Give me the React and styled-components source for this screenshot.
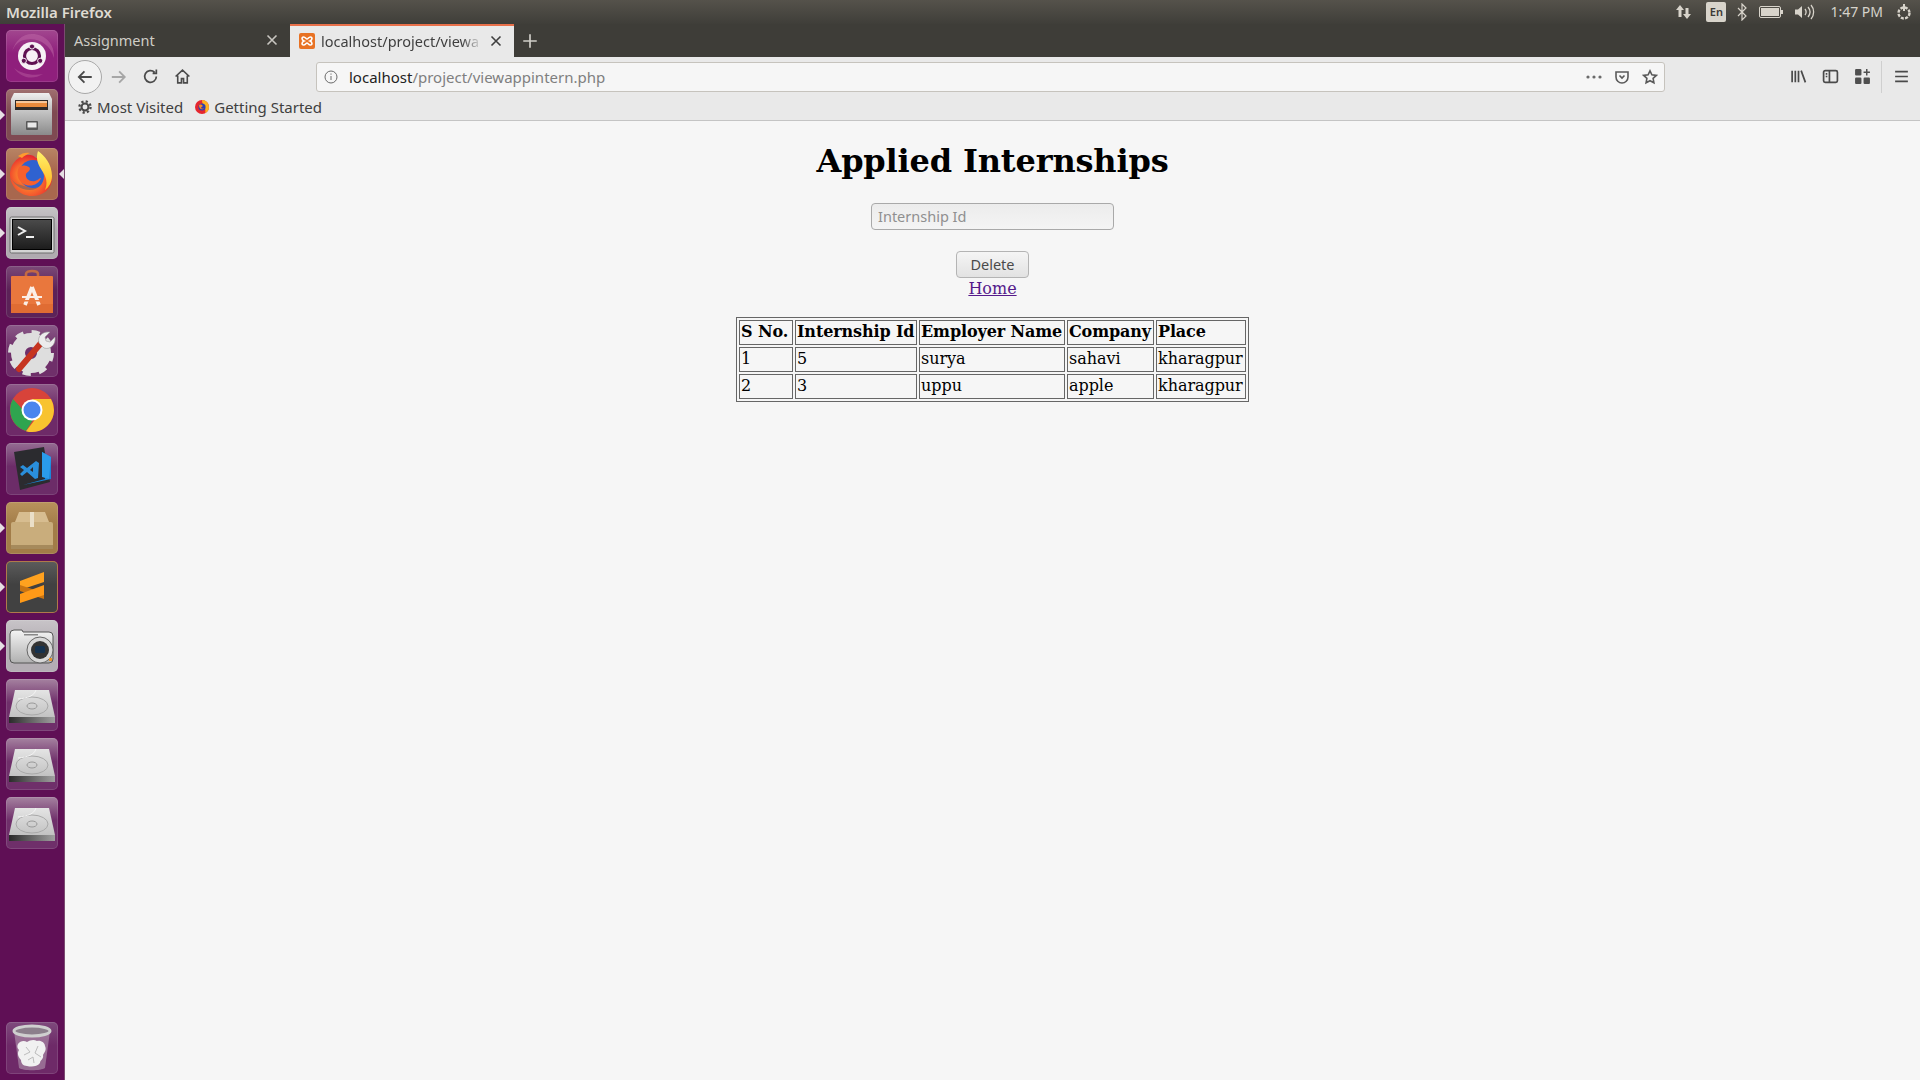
import styled, { createGlobalStyle } from 'styled-components';

const UI_FONT = '"Noto Sans", "Open Sans", sans-serif';
const PAGE_FONT = '"DejaVu Serif", serif';

const COLUMNS = [
	{ title: 'S No.', width: 54 },
	{ title: 'Internship Id', width: 122 },
	{ title: 'Employer Name', width: 146 },
	{ title: 'Company', width: 87 },
	{ title: 'Place', width: 90 },
];

const ROWS = [
	[ '1', '5', 'surya', 'sahavi', 'kharagpur' ],
	[ '2', '3', 'uppu', 'apple', 'kharagpur' ],
];

const GlobalStyle = createGlobalStyle`
	html, body {
		margin: 0;
		padding: 0;
		height: 100%;
		overflow: hidden;
		background: #f6f6f6;
	}
`;

const Screen = styled.div`
	width: 1920px;
	height: 1080px;
	display: flex;
	flex-direction: column;
	overflow: hidden;
`;

const TopBar = styled.div`
	box-sizing: border-box;
	height: 24px;
	flex: none;
	display: flex;
	align-items: center;
	justify-content: space-between;
	padding: 0 7px 1px 6px;
	background: linear-gradient(#55524b, #3f3e39);
	color: #dfdbd2;
	font: 600 15px ${ UI_FONT };
`;

const Indicators = styled.div`
	display: flex;
	align-items: center;
	height: 23px;
`;

const TimeLabel = styled.span`
	font: 400 14px ${ UI_FONT };
	color: #d6d3cb;
	margin: 0 12px 0 15px;
`;

const LangBadge = styled.span`
	width: 20px;
	height: 20px;
	border-radius: 2px;
	background: #d8d4cb;
	color: #3c3b37;
	font: 600 11px/20px ${ UI_FONT };
	text-align: center;
	margin: 0 11px 0 13px;
`;

const BatteryGlyph = styled.svg`
	margin-left: 12px;
`;

const VolumeGlyph = styled.svg`
	margin-left: 11px;
`;

const Body = styled.div`
	flex: 1;
	display: flex;
	min-height: 0;
`;

const Launcher = styled.nav`
	width: 64px;
	flex: none;
	display: flex;
	flex-direction: column;
	gap: 7px;
	padding: 6px 0;
	background: #5f0f55;
	border-right: 1px solid #7a4a70;
`;

const Tile = styled.div`
	position: relative;
	width: 52px;
	height: 52px;
	margin-left: 6px;
	margin-top: ${ ( { $bottom } ) => $bottom ? 'auto' : '0' };
	border-radius: 5px;
	background: linear-gradient(${ ( { $top } ) => $top || '#7e4a7c' }, ${ ( { $tint } ) => $tint || '#6e2a68' } 45%);
	box-shadow: inset 0 0 0 1px ${ ( { $edge } ) => $edge || 'rgba(255,255,255,.12)' };
`;

const RunPip = styled.span`
	position: absolute;
	top: 21px;
	${ ( { $right } ) => $right ? 'right: -6px;' : 'left: -6px;' }
	width: 0;
	height: 0;
	border-top: 5px solid transparent;
	border-bottom: 5px solid transparent;
	${ ( { $right } ) => $right ? 'border-right: 5px solid #e6dfe4;' : 'border-left: 5px solid #e6dfe4;' }
`;

const Glyph = styled.svg`
	display: block;
	width: 52px;
	height: 52px;
`;

const Browser = styled.div`
	flex: 1;
	min-width: 0;
	display: flex;
	flex-direction: column;
`;

const TabStrip = styled.div`
	height: 33px;
	flex: none;
	display: flex;
	align-items: stretch;
	background: #3e3d38;
`;

const Tab = styled.div`
	box-sizing: border-box;
	width: ${ ( { $active } ) => $active ? '224px' : '225px' };
	display: flex;
	align-items: center;
	gap: 6px;
	padding: 0 10px ${ ( { $active } ) => $active ? '1px' : '2px' } 9px;
	font: 400 14.5px ${ UI_FONT };
	color: ${ ( { $active } ) => $active ? '#3f3f3f' : '#cfcdc6' };
	background: ${ ( { $active } ) => $active ? '#e9e9e9' : 'transparent' };
	border-top: ${ ( { $active } ) => $active ? '2px solid #e8704a' : '0' };
`;

const TabTitle = styled.span`
	flex: 1;
	min-width: 0;
	white-space: nowrap;
`;

const FadingTabTitle = styled(TabTitle)`
	-webkit-mask-image: linear-gradient(to left, transparent, #000 20px);
	mask-image: linear-gradient(to left, transparent, #000 20px);
`;

const NewTab = styled.div`
	width: 32px;
	display: flex;
	align-items: center;
	justify-content: center;
`;

const NavBar = styled.div`
	height: 39px;
	flex: none;
	display: flex;
	align-items: center;
	background: #e9e9e9;
	padding-left: 3px;
`;

const BackButton = styled.div`
	box-sizing: border-box;
	width: 34px;
	height: 34px;
	border-radius: 50%;
	border: 1px solid #a8a8a8;
	background: #f2f2f2;
	display: flex;
	align-items: center;
	justify-content: center;
	flex: none;
`;

const NavButton = styled.div`
	width: 32px;
	height: 32px;
	display: flex;
	align-items: center;
	justify-content: center;
	flex: none;
`;

const UrlBar = styled.div`
	box-sizing: border-box;
	width: 1349px;
	height: 30px;
	margin-left: 118px;
	flex: none;
	display: flex;
	align-items: center;
	padding: 0 0 0 6px;
	background: #f6f6f6;
	border: 1px solid #c6c3bd;
	border-radius: 3px;
	font: 400 15px ${ UI_FONT };
`;

const UrlText = styled.div`
	flex: 1;
	margin-left: 10px;
	color: #7f7f7f;
	white-space: nowrap;

	b {
		font-weight: 400;
		color: #222;
	}
`;

const UrlAction = styled.span`
	width: 28px;
	height: 20px;
	display: flex;
	align-items: center;
	justify-content: center;
`;

const Tools = styled.div`
	flex: 1;
	display: flex;
	align-items: center;
	padding-left: 117px;
`;

const ToolSlot = styled.span`
	width: 32px;
	display: flex;
	align-items: center;
	justify-content: center;
	flex: none;
`;

const ToolDivider = styled.span`
	width: 1px;
	height: 32px;
	background: #cfcfcf;
	margin: 0 3px;
`;

const BookmarksBar = styled.div`
	box-sizing: border-box;
	height: 25px;
	flex: none;
	display: flex;
	align-items: center;
	gap: 11px;
	padding: 0 0 3px 13px;
	background: #e9e9e9;
	border-bottom: 1px solid #c4c4c4;
	font: 400 15px ${ UI_FONT };
	color: #3f3f3f;
`;

const Bookmark = styled.span`
	display: flex;
	align-items: center;
	gap: ${ ( { $gap } ) => $gap || 4 }px;
`;

const Page = styled.main`
	flex: 1;
	display: flex;
	flex-direction: column;
	align-items: center;
	background: #f6f6f6;
	font: 400 16px/19px ${ PAGE_FONT };
	color: #000;
`;

const Heading = styled.h1`
	margin: 22px 0 23px;
	font: 700 32px/37px ${ PAGE_FONT };
	letter-spacing: -.16px;
`;

const IdInput = styled.input`
	box-sizing: border-box;
	width: 243px;
	height: 27px;
	padding: 0 6px 2px;
	border: 1px solid #a9a9a9;
	border-radius: 4px;
	background: linear-gradient(#ececec, #f4f4f4);
	font: 400 14.5px ${ UI_FONT };
	outline: none;

	&::placeholder {
		color: #8f8f8f;
		opacity: 1;
	}
`;

const DeleteButton = styled.button`
	box-sizing: border-box;
	width: 73px;
	height: 27px;
	margin-top: 21px;
	padding: 0 0 2px;
	border: 1px solid #b4b4b4;
	border-radius: 4px;
	background: linear-gradient(#f5f5f5, #e2e2e2);
	color: #4a4a4a;
	font: 400 14.5px ${ UI_FONT };
`;

const HomeLink = styled.a`
	color: #551a8b;
	text-decoration: underline;
	line-height: 19px;
	margin-top: 1px;
`;

const ResultTable = styled.table`
	margin-top: 19px;
	border: 1px solid #666;
	border-spacing: 2px;
	border-collapse: separate;
	font: 400 16px/21px ${ PAGE_FONT };
`;

const HeadCell = styled.th`
	box-sizing: border-box;
	width: ${ ( { $width } ) => $width }px;
	border: 1px solid #666;
	padding: 0 1px 2px;
	font-weight: 700;
	letter-spacing: -.12px;
	text-align: left;
	white-space: nowrap;
`;

const DataCell = styled.td`
	border: 1px solid #666;
	padding: 0 1px 2px;
	letter-spacing: -.05px;
	text-align: left;
	white-space: nowrap;
`;

const SYS = { fill: '#d8d4cb' };

const UbuntuIcon = () => (
	<Glyph viewBox="0 0 52 52">
		<path d="M26 4c13 0 23 10 22 24C44 14 32 7 18 10c-6 1-10 6-12 12C9 11 16 4 26 4z" fill="#c06aa8" opacity=".5" />
		<path d="M8 38c6 9 18 13 29 6-10 2-22 0-29-6z" fill="#c06aa8" opacity=".4" />
		<circle cx="26" cy="26" r="14" fill="#f7f1f6" />
		<circle cx="26" cy="26" r="7.5" fill="none" stroke="#5f1152" strokeWidth="3.2" />
		<circle cx="26" cy="16.500" r="2.600" fill="#5f1152" stroke="#f7f1f6" strokeWidth="1" />
		<circle cx="17.800" cy="30.800" r="2.600" fill="#5f1152" stroke="#f7f1f6" strokeWidth="1" />
		<circle cx="34.200" cy="30.800" r="2.600" fill="#5f1152" stroke="#f7f1f6" strokeWidth="1" />
	</Glyph>
);

const FilesIcon = () => (
	<Glyph viewBox="0 0 52 52">
		<defs>
			<linearGradient id="cab" x1="0" y1="0" x2="0" y2="1">
				<stop offset="0" stopColor="#c8c8c8" />
				<stop offset="1" stopColor="#8a8a8a" />
			</linearGradient>
			<linearGradient id="cabTop" x1="0" y1="0" x2="0" y2="1">
				<stop offset="0" stopColor="#efefef" />
				<stop offset="1" stopColor="#bdbdbd" />
			</linearGradient>
		</defs>
		<path d="M8 4h35l3 6v12H5V10z" fill="url(#cabTop)" />
		<rect x="9" y="11" width="33" height="11" fill="#2e2a28" />
		<rect x="10" y="12" width="31" height="2" fill="#f6c79a" />
		<rect x="10" y="14" width="31" height="4" fill="#e98b3c" />
		<rect x="5" y="21" width="41" height="25" rx="1" fill="url(#cab)" />
		<rect x="20" y="32" width="12" height="9" rx="1" fill="#575757" />
		<rect x="21.500" y="33.500" width="9" height="5" fill="#e8e8e8" />
	</Glyph>
);

const FirefoxIcon = () => (
	<Glyph viewBox="0 0 52 52">
		<defs>
			<radialGradient id="ffo" cx=".45" cy=".6" r=".6">
				<stop offset="0" stopColor="#ffb02e" />
				<stop offset=".6" stopColor="#f6602d" />
				<stop offset="1" stopColor="#e5272f" />
			</radialGradient>
			<linearGradient id="ffy" x1="0" y1="0" x2="0" y2="1">
				<stop offset="0" stopColor="#fff36b" />
				<stop offset="1" stopColor="#ffb31f" />
			</linearGradient>
		</defs>
		<path d="M4 27C4 15 13 7 23 7c4 0 5 1 7 3 6 0 9 4 9 4l-4 12-10 14-14-4C7 33 4 31 4 27z" fill="url(#ffo)" />
		<circle cx="27" cy="26" r="14" fill="#2f62d0" />
		<path d="M32 3c-2 5 1 8 5 10 4 4 9 12 9 17 0 11-9 18-20 18C14 48 5 39 4 28c3 8 10 14 20 14 8 0 14-6 14-14 0-9-10-12-6-25z" fill="url(#ffo)" />
		<path d="M32 3c6 4 14 13 14 25 0 6-3 11-7 14 2-5 2-9 0-14-2-6-11-13-7-25z" fill="url(#ffy)" />
		<path d="M13 19c4-2 7-2 10 0 3 3-2 5-3 7-1 5 4 8 9 7 4-1 4-3 6-3-2 6-9 9-15 7-7-2-11-10-7-18z" fill="#f6602d" />
		<path d="M12 8c4-3 8-4 12-3-3 1-6 3-8 5z" fill="#ff9a2e" />
	</Glyph>
);

const TerminalIcon = () => (
	<Glyph viewBox="0 0 52 52">
		<defs>
			<linearGradient id="term" x1="0" y1="0" x2="0" y2="1">
				<stop offset="0" stopColor="#4a4a4a" />
				<stop offset="1" stopColor="#1d1d1d" />
			</linearGradient>
		</defs>
		<rect x="4" y="10" width="44" height="36" rx="1.500" fill="#d4d4d4" stroke="#6f6f6f" />
		<rect x="6" y="12" width="40" height="31" fill="#000" />
		<rect x="7" y="13" width="38" height="29" fill="url(#term)" />
		<path d="M12 20l7 4-7 4" fill="none" stroke="#f0f0f0" strokeWidth="2" />
		<rect x="20" y="29" width="8" height="2" fill="#f0f0f0" />
	</Glyph>
);

const StoreIcon = () => (
	<Glyph viewBox="0 0 52 52">
		<path d="M20 14V8c0-4 12-4 12 0v6" fill="none" stroke="#c46a42" strokeWidth="2.600" />
		<rect x="5" y="10" width="42" height="37" rx="1" fill="#e9773d" />
		<rect x="5" y="38" width="42" height="9" fill="#e06c33" />
		<path d="M26 21l-7 18M26 21l7 18" fill="none" stroke="#fbeee6" strokeWidth="3.600" />
		<rect x="16" y="30" width="20" height="2" fill="#fbeee6" />
		<rect x="18" y="34" width="16" height="1.500" fill="#e9773d" />
	</Glyph>
);

const ToolsIcon = () => (
	<Glyph viewBox="0 0 52 52">
		<circle cx="25" cy="28" r="13" fill="none" stroke="#dedede" strokeWidth="14" />
		<circle cx="25" cy="28" r="20.500" fill="none" stroke="#dedede" strokeWidth="5" strokeDasharray="8 8.100" />
		<path d="M13 44L35 18" stroke="#c6341f" strokeWidth="6" strokeLinecap="round" />
		<path d="M33 18c-2-6 3-12 11-11l-5 5 1 4 4 1 5-5c1 8-5 13-11 11z" fill="#ececec" stroke="#999" strokeWidth=".6" />
	</Glyph>
);

const ChromeIcon = () => (
	<Glyph viewBox="0 0 52 52">
		<circle cx="26" cy="26" r="22" fill="#d8433a" />
		<path d="M7 15a22 22 0 0 0 13 32l10-16-11-3z" fill="#2fa44f" />
		<path d="M45 15H26l8 14-14 18.200A22 22 0 0 0 45 15z" fill="#f8c32f" />
		<circle cx="26" cy="26" r="10.500" fill="#fff" />
		<circle cx="26" cy="26" r="8.500" fill="#4a85ee" />
	</Glyph>
);

const CodeIcon = () => (
	<Glyph viewBox="0 0 52 52">
		<path d="M8 9l30-5 6 35-30 8z" fill="#2b2b2f" />
		<path d="M36 9l9 5v22l-28 6 22-6z" fill="#1a86d8" />
		<path d="M36 9l9 5-2 22-7-2z" fill="#2a9cec" />
		<path d="M14 24l3-2 4 3 9-7 3 2-1 15-3 1-8-7-5 4-2-2 4-4z" fill="#2a8fdc" />
		<path d="M27 24l-3 3 3 2z" fill="#2b2b2f" />
	</Glyph>
);

const BoxIcon = () => (
	<Glyph viewBox="0 0 52 52">
		<path d="M9 20l4-10h26l4 10z" fill="#d7bd90" />
		<rect x="5" y="20" width="42" height="27" rx="2" fill="#c9ad7c" />
		<rect x="5" y="43" width="42" height="4" fill="#a68a5c" />
		<rect x="24" y="10" width="4" height="15" fill="#eadfc8" />
	</Glyph>
);

const SublimeIcon = () => (
	<Glyph viewBox="0 0 52 52">
		<path d="M14 20L38 11v10l-24 8z" fill="#ffa21f" />
		<path d="M14 24l24 8v6l-24-8z" fill="#c97412" />
		<path d="M14 33l24-9v10l-24 8z" fill="#ff9a18" />
	</Glyph>
);

const CameraIcon = () => (
	<Glyph viewBox="0 0 52 52">
		<defs>
			<linearGradient id="cam" x1="0" y1="0" x2="0" y2="1">
				<stop offset="0" stopColor="#f4f4f4" />
				<stop offset="1" stopColor="#b0b0b0" />
			</linearGradient>
		</defs>
		<path d="M8 10h8l1 2h26a4 4 0 0 1 4 4v23a4 4 0 0 1-4 4H8a4 4 0 0 1-4-4V14a4 4 0 0 1 4-4z" fill="url(#cam)" stroke="#555" />
		<circle cx="34" cy="30" r="13" fill="#d8d8d8" stroke="#666" />
		<circle cx="34" cy="30" r="9" fill="#333" />
		<rect x="29" y="26" width="10" height="7" rx="1.500" fill="#16324f" />
		<rect x="43" y="38" width="3" height="3" fill="#e8962c" />
		<rect x="18" y="14" width="14" height="1.500" fill="#888" />
	</Glyph>
);

const DriveIcon = () => (
	<Glyph viewBox="0 0 52 52">
		<defs>
			<linearGradient id="hdd" x1="0" y1="0" x2="0" y2="1">
				<stop offset="0" stopColor="#e4e4e4" />
				<stop offset="1" stopColor="#c2c2c2" />
			</linearGradient>
			<linearGradient id="hddf" x1="0" y1="0" x2="1" y2="0">
				<stop offset="0" stopColor="#2a2a2a" />
				<stop offset=".35" stopColor="#555" />
				<stop offset="1" stopColor="#a0a0a0" />
			</linearGradient>
		</defs>
		<path d="M9 11h34l6 27H3z" fill="url(#hdd)" />
		<rect x="3" y="38" width="46" height="6" fill="url(#hddf)" />
		<ellipse cx="26" cy="27" rx="16" ry="9" fill="none" stroke="#a9a9a9" />
		<ellipse cx="26" cy="27" rx="5" ry="3" fill="none" stroke="#999" />
		<path d="M12 20c10-1 16-3 18-9" fill="none" stroke="#f4f4f4" />
	</Glyph>
);

const TrashIcon = () => (
	<Glyph viewBox="0 0 52 52">
		<path d="M8 9l5 37c4 3 22 3 26 0l5-37z" fill="#b9a3b7" opacity=".55" />
		<path d="M12 22c2-3 6-4 9-2 3-2 7-3 10-1 4-1 8 2 8 5 2 4-1 7-2 9 1 4-3 5-3 8-3 4-9 4-13 3-4 0-6-3-6-6-3-3-4-7-2-10-2-2-2-4-1-6z" fill="#f1f1f1" />
		<path d="M20 25l4 5-6 3M32 24l-3 7 6 4M22 38l5-3 1 6" fill="none" stroke="#bcbcbc" />
		<ellipse cx="26" cy="9" rx="18" ry="5" fill="#8c7f8c" stroke="#cfcfcf" strokeWidth="3" />
	</Glyph>
);

const Line = ( { d, color = '#4a4a4a', size = 16, width = 1.6 } ) => (
	<svg width={ size } height={ size } viewBox="0 0 16 16" fill="none" stroke={ color } strokeWidth={ width }>
		<path d={ d } />
	</svg>
);

const CloseIcon = ( { color } ) => <Line d="M3.500 3.500l9 9M12.500 3.500l-9 9" color={ color } size={ 16 } />;

const XamppFavicon = () => (
	<svg width="16" height="16" viewBox="0 0 16 16">
		<rect width="16" height="16" rx="2" fill="#e87224" />
		<path d="M4.500 4c2 0 2.500 2 3.500 2s1.500-2 3.500-2 2 3-.5 4c2.500 1 2.500 4 .5 4S9 10 8 10s-1.500 2-3.500 2-2-3 .5-4c-2.500-1-2.500-4-.5-4z" fill="none" stroke="#fff" strokeWidth="1.600" />
	</svg>
);

const GearSmall = () => (
	<svg width="14" height="14" viewBox="0 0 16 16" fill="none" stroke="#4a4a4a">
		<circle cx="8" cy="8" r="4" strokeWidth="2.400" />
		<circle cx="8" cy="8" r="6.400" strokeWidth="2.600" strokeDasharray="2.500 2.530" />
	</svg>
);

const FirefoxSmall = () => (
	<svg width="16" height="16" viewBox="0 0 16 16">
		<circle cx="8" cy="8" r="7" fill="#e5272f" />
		<path d="M8 1a7 7 0 0 1 7 7c0 3-1.500 5-4 6 1-3 0-5-1-7S8 4 8 1z" fill="#ffb31f" />
		<circle cx="8" cy="8" r="3.600" fill="#2f3fb0" />
		<path d="M5 6c2-1 3 0 4 1-1 1-2 1-2 2 1 1 2 1 3 0-1 2-5 2-5-3z" fill="#ff8a1f" />
	</svg>
);

function Launchers() {
	return (
		<Launcher>
			<Tile $top="#a2478f" $tint="#8f1f7c"><UbuntuIcon /></Tile>
			<Tile $top="#a07070" $tint="#7f4a52"><RunPip /><FilesIcon /></Tile>
			<Tile $top="#b88464" $tint="#a8674e"><RunPip /><RunPip $right /><FirefoxIcon /></Tile>
			<Tile $top="#c6c4c6" $tint="#b0aab0"><RunPip /><TerminalIcon /></Tile>
			<Tile $top="#7b4a78" $tint="#5c2258"><StoreIcon /></Tile>
			<Tile $top="#8a5a88" $tint="#6f2f6a"><ToolsIcon /></Tile>
			<Tile $top="#8d5a88" $tint="#6e2a68"><ChromeIcon /></Tile>
			<Tile $top="#946c92" $tint="#6c2c68"><CodeIcon /></Tile>
			<Tile $top="#b8925c" $tint="#a27c48"><RunPip /><BoxIcon /></Tile>
			<Tile $top="#5c5c5c" $tint="#414141" $edge="#b07a4a"><RunPip /><SublimeIcon /></Tile>
			<Tile $top="#c8c4c8" $tint="#b4aeb4"><RunPip /><CameraIcon /></Tile>
			<Tile $top="#a582a0" $tint="#6f2f6a"><DriveIcon /></Tile>
			<Tile $top="#a582a0" $tint="#6f2f6a"><DriveIcon /></Tile>
			<Tile $top="#a582a0" $tint="#6f2f6a"><DriveIcon /></Tile>
			<Tile $bottom $top="#7e4a7c" $tint="#6e2a68"><TrashIcon /></Tile>
		</Launcher>
	);
}

function SystemTray() {
	return (
		<Indicators>
			<svg width="18" height="18" viewBox="0 0 18 18" { ...SYS }>
				<path d="M5 2l4 5H6.500v7h-3V7H1zM12 16l-4-5h2.500V5h3v6H16z" />
			</svg>
			<LangBadge>En</LangBadge>
			<svg width="10" height="18" viewBox="0 0 10 18" fill="none" stroke="#d8d4cb" strokeWidth="1.200">
				<path d="M1 5l8 8-4 4V1l4 4-8 8" />
			</svg>
			<BatteryGlyph width="24" height="14" viewBox="0 0 24 14">
				<rect x=".5" y="1.500" width="21" height="11" rx="1.500" fill="none" stroke="#d8d4cb" />
				<rect x="2" y="3" width="18" height="8" fill="#d8d4cb" />
				<rect x="22" y="5" width="2" height="4" fill="#d8d4cb" />
			</BatteryGlyph>
			<VolumeGlyph width="21" height="18" viewBox="0 0 21 18" fill="none" stroke="#d8d4cb" strokeWidth="1.300">
				<path d="M1 6.500h3L8 3v12l-4-3.500H1z" fill="#d8d4cb" stroke="none" />
				<path d="M11 6c1.500 2 1.500 4 0 6M14 4c2.500 3 2.500 7 0 10M17 2c3.500 4 3.500 10 0 14" />
			</VolumeGlyph>
			<TimeLabel>1:47 PM</TimeLabel>
			<svg width="18" height="18" viewBox="0 0 18 18" fill="none" stroke="#d8d4cb">
				<circle cx="9" cy="10" r="5.500" strokeWidth="2.400" strokeDasharray="3 1.320" />
				<path d="M9 1v7" strokeWidth="2" />
			</svg>
		</Indicators>
	);
}

function App() {
	return (
		<Screen>
			<GlobalStyle />
			<TopBar>
				<span>Mozilla Firefox</span>
				<SystemTray />
			</TopBar>
			<Body>
				<Launchers />
				<Browser>
					<TabStrip>
						<Tab>
							<TabTitle>Assignment</TabTitle>
							<CloseIcon color="#c8c6c0" />
						</Tab>
						<Tab $active>
							<XamppFavicon />
							<FadingTabTitle>localhost/project/viewa</FadingTabTitle>
							<CloseIcon color="#3f3f3f" />
						</Tab>
						<NewTab>
							<Line d="M8 2v12M2 8h12" color="#d0cec8" size={ 18 } width={ 1.5 } />
						</NewTab>
					</TabStrip>
					<NavBar>
						<BackButton><Line d="M14 8H2.500M7.500 3l-5 5 5 5" size={ 18 } /></BackButton>
						<NavButton><Line d="M14 8H2.500M9 3l5 5-5 5" color="#a6a6a6" size={ 18 } /></NavButton>
						<NavButton><Line d="M13.500 8a5.500 5.500 0 1 1-1.600-3.900M13.500 1.500V5H10" size={ 17 } /></NavButton>
						<NavButton><Line d="M1.500 8L8 2l6.500 6M3.500 7v7h3.500v-4h2v4h3.500V7" size={ 17 } width={ 1.5 } /></NavButton>
						<UrlBar>
							<svg width="16" height="16" viewBox="0 0 16 16" fill="none" stroke="#6a6a6a">
								<circle cx="8" cy="8" r="6" />
								<path d="M8 7v4M8 4.500v1.200" />
							</svg>
							<UrlText><b>localhost</b>/project/viewappintern.php</UrlText>
							<UrlAction>
								<svg width="16" height="4" viewBox="0 0 16 4" fill="#6a6a6a">
									<circle cx="2" cy="2" r="1.600" />
									<circle cx="8" cy="2" r="1.600" />
									<circle cx="14" cy="2" r="1.600" />
								</svg>
							</UrlAction>
							<UrlAction><Line d="M2 3h12v5a6 6 0 0 1-12 0zM5.500 6.500L8 9l2.500-2.500" color="#5a5a5a" /></UrlAction>
							<UrlAction><Line d="M8 1.800l1.900 4 4.400.6-3.200 3 .8 4.400L8 11.700l-3.900 2.100.8-4.400-3.200-3 4.400-.6z" color="#5a5a5a" /></UrlAction>
						</UrlBar>
						<Tools>
							<ToolSlot><Line d="M2 2.500v11M5 2.500v11M8 2.500v11M10.500 2.500l4 11" size={ 17 } /></ToolSlot>
							<ToolSlot><Line d="M3 2.500h10a1.500 1.500 0 0 1 1.500 1.500v8a1.500 1.500 0 0 1-1.500 1.500H3A1.500 1.500 0 0 1 1.500 12V4A1.500 1.500 0 0 1 3 2.500zM7 2.500v11M3.500 5.500h1.500M3.500 8h1.500" size={ 17 } /></ToolSlot>
							<ToolSlot>
								<svg width="17" height="17" viewBox="0 0 16 16" fill="#4f4f4f">
									<rect x="1" y="1" width="6" height="6" rx="1" />
									<rect x="1" y="9" width="6" height="6" rx="1" />
									<rect x="9" y="9" width="6" height="6" rx="1" />
									<path d="M11.300 1h1.400v2.300H15v1.400h-2.300V7h-1.400V4.700H9V3.300h2.300z" />
								</svg>
							</ToolSlot>
							<ToolDivider />
							<ToolSlot><Line d="M2 3.500h12M2 8h12M2 12.500h12" size={ 17 } /></ToolSlot>
						</Tools>
					</NavBar>
					<BookmarksBar>
						<Bookmark $gap={ 5 }><GearSmall />Most Visited</Bookmark>
						<Bookmark><FirefoxSmall />Getting Started</Bookmark>
					</BookmarksBar>
					<Page>
						<Heading>Applied Internships</Heading>
						<IdInput placeholder="Internship Id" />
						<DeleteButton>Delete</DeleteButton>
						<HomeLink href="#home">Home</HomeLink>
						<ResultTable>
							<thead>
								<tr>
									{ COLUMNS.map( ( column ) => (
										<HeadCell key={ column.title } $width={ column.width }>{ column.title }</HeadCell>
									) ) }
								</tr>
							</thead>
							<tbody>
								{ ROWS.map( ( row ) => (
									<tr key={ row[ 0 ] }>
										{ row.map( ( value, index ) => (
											<DataCell key={ index }>{ value }</DataCell>
										) ) }
									</tr>
								) ) }
							</tbody>
						</ResultTable>
					</Page>
				</Browser>
			</Body>
		</Screen>
	);
}

export default App;
